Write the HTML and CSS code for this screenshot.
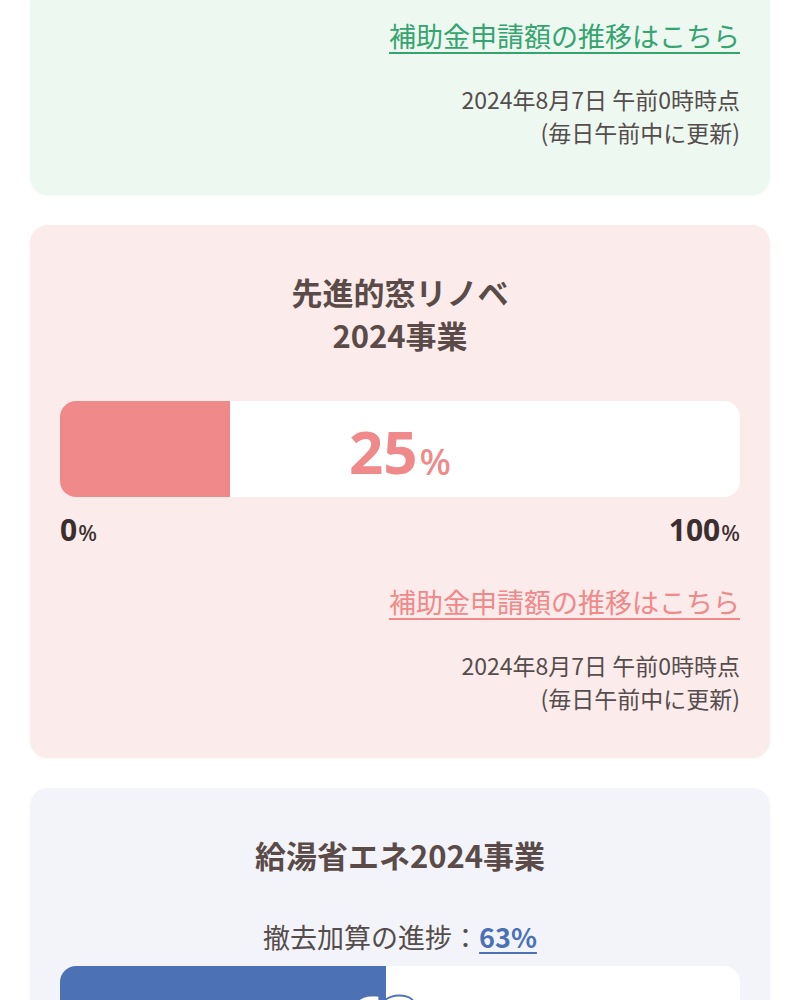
FILE: index.html
```html
<!DOCTYPE html>
<html lang="ja">
<head>
<meta charset="utf-8">
<link rel="stylesheet" href="styles.css">
</head>
<body>
<div class="page">
  <section class="card card-green card-first">
    <div class="link-row"><a class="link link-green" href="#">補助金申請額の推移はこちら</a></div>
    <div class="date">2024年8月7日 午前0時時点<br>(毎日午前中に更新)</div>
  </section>

  <section class="card card-pink">
    <h2 class="title">先進的窓リノベ<br>2024事業</h2>
    <div class="bar">
      <div class="fill fill-pink" style="width:25%"></div>
      <div class="bar-text bar-text-pink">25<span class="pct">%</span></div>
    </div>
    <div class="scale"><span>0<small>%</small></span><span>100<small>%</small></span></div>
    <div class="link-row"><a class="link link-pink" href="#">補助金申請額の推移はこちら</a></div>
    <div class="date">2024年8月7日 午前0時時点<br>(毎日午前中に更新)</div>
  </section>

  <section class="card card-blue">
    <h2 class="title">給湯省エネ2024事業</h2>
    <p class="sub">撤去加算の進捗：<a class="link-blue" href="#">63%</a></p>
    <div class="bar bar-tight">
      <div class="fill fill-blue" style="width:48%"></div>
      <div class="bar-text bar-text-blue">63<span class="pct">%</span></div>
    </div>
    <div class="scale"><span>0<small>%</small></span><span>100<small>%</small></span></div>
  </section>
</div>
</body>
</html>
```

FILE: styles.css
```css
* { box-sizing: border-box; }
html, body { margin: 0; padding: 0; background: #ffffff; }
body {
  font-family: "Noto Sans CJK JP", "Noto Sans", sans-serif;
  color: #574f4e;
}
.page {
  padding: 0 29px 0 30px;
  display: flex;
  flex-direction: column;
  gap: 30px;
}
.card {
  border-radius: 18px;
  padding: 45px 30px 43px;
  box-shadow: 0 1px 3px rgba(0,0,0,0.03);
}
.card-first {
  border-top-left-radius: 0;
  border-top-right-radius: 0;
  padding-top: 16px;
  height: 195px;
}
.card-green { background: #edf8f1; }
.card-pink { background: #fbebea; }
.card-blue { background: #f3f4f9; }

.title {
  margin: 0;
  text-align: center;
  font-size: 31px;
  line-height: 43px;
  font-weight: 700;
  color: #5a4b49;
}
.bar {
  position: relative;
  margin-top: 45px;
  height: 96px;
  background: #ffffff;
  border-radius: 16px;
  overflow: hidden;
}
.bar-tight { margin-top: 9px; }
.fill {
  height: 100%;
}
.fill-pink { background: #f08989; }
.fill-blue { background: #4d71b5; }
.bar-text {
  position: absolute;
  inset: 0;
  display: flex;
  align-items: center;
  justify-content: center;
  font-family: "Noto Sans", "Noto Sans CJK JP", sans-serif;
  font-size: 60px;
  font-weight: 700;
  line-height: 1;
  padding-top: 4px;
}
.bar-text .pct {
  font-size: 37px;
  font-weight: 500;
  align-self: center;
  margin-top: 18px;
  margin-left: 2px;
}
.bar-text-pink { color: #f08989; }
.bar-text-blue {
  color: #ffffff;
  text-shadow: 2px 0 0 #4d71b5, -2px 0 0 #4d71b5, 0 2px 0 #4d71b5, 0 -2px 0 #4d71b5,
               1.5px 1.5px 0 #4d71b5, -1.5px -1.5px 0 #4d71b5, 1.5px -1.5px 0 #4d71b5, -1.5px 1.5px 0 #4d71b5;
}
.scale {
  margin-top: 18px;
  display: flex;
  justify-content: space-between;
  font-family: "Noto Sans", "Noto Sans CJK JP", sans-serif;
  font-size: 30px;
  line-height: 30px;
  font-weight: 700;
  color: #3a2f2e;
}
.scale small {
  font-size: 22px;
  font-weight: 500;
  margin-left: 1px;
}
.link-row {
  margin-top: 35px;
  text-align: right;
  font-size: 27px;
  line-height: 40px;
}
.card-first .link-row { margin-top: 0; }
.link {
  text-decoration: underline;
  text-decoration-thickness: 2px;
  text-underline-offset: 5px;
}
.link-green { color: #36a46f; }
.link-pink { color: #f08989; }
.date {
  margin-top: 27px;
  text-align: right;
  font-size: 23px;
  line-height: 33px;
  color: #554d4c;
}
.card-first .date { margin-top: 27px; }
.sub {
  margin: 41px 0 0;
  text-align: center;
  font-size: 27px;
  line-height: 40px;
  color: #554d4c;
}
.link-blue {
  color: #4a71b8;
  font-weight: 700;
  text-decoration: underline;
  text-decoration-thickness: 2px;
  text-underline-offset: 4px;
}
```
